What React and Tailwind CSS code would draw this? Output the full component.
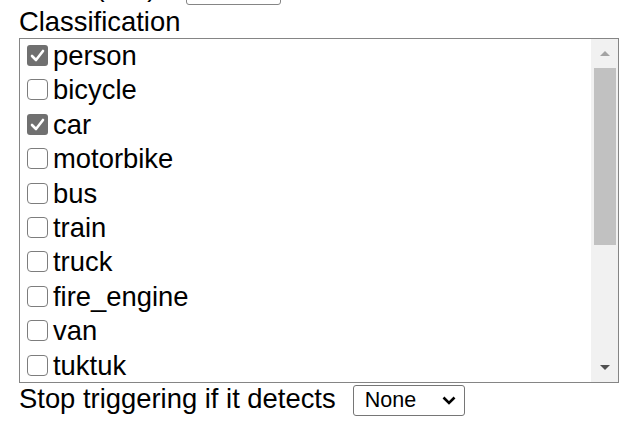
import React from "react";

const classes = [
  { name: "person", checked: true },
  { name: "bicycle", checked: false },
  { name: "car", checked: true },
  { name: "motorbike", checked: false },
  { name: "bus", checked: false },
  { name: "train", checked: false },
  { name: "truck", checked: false },
  { name: "fire_engine", checked: false },
  { name: "van", checked: false },
  { name: "tuktuk", checked: false },
  { name: "ambulance", checked: false },
  { name: "police_car", checked: false },
  { name: "dog", checked: false },
  { name: "cat", checked: false },
  { name: "horse", checked: false },
  { name: "cow", checked: false },
];

function Checkbox({ checked }) {
  if (checked) {
    return (
      <div className="w-[21px] h-[21px] rounded-[3px] bg-[#707070] flex items-center justify-center shrink-0">
        <svg width="15" height="13" viewBox="0 0 15 13">
          <path d="M2 7 L6 11 L13 2" fill="none" stroke="white" strokeWidth="2.6" strokeLinecap="round" strokeLinejoin="round" />
        </svg>
      </div>
    );
  }
  return <div className="w-[21px] h-[21px] rounded-[4px] border-[1.5px] border-[#7d7d7d] bg-white shrink-0"></div>;
}

function Scrollbar() {
  return (
    <div className="w-[27px] shrink-0 bg-[#f1f1f1] flex flex-col">
      <div className="h-[29px] flex items-center justify-center">
        <div className="w-0 h-0 border-l-[5px] border-r-[5px] border-b-[5px] border-l-transparent border-r-transparent border-b-[#a3a3a3]"></div>
      </div>
      <div className="h-[177px] ml-[3px] mr-[2px] bg-[#c1c1c1]"></div>
      <div className="flex-1"></div>
      <div className="h-[29px] flex items-center justify-center">
        <div className="w-0 h-0 border-l-[5px] border-r-[5px] border-t-[5px] border-l-transparent border-r-transparent border-t-[#505050]"></div>
      </div>
    </div>
  );
}

export default function App() {
  return (
    <div className="w-[634px] h-[435px] overflow-hidden bg-white text-black text-[27.4px] leading-[31px] font-['Liberation_Sans',Arial,sans-serif]">
      <div className="pl-[19px]">
        {/* previous field, mostly scrolled off */}
        <div className="-mt-[29px] flex items-start">
          <span>Timer (sec)</span>
          <div className="ml-[30px] mt-[3px] w-[95px] h-[31px] rounded-[3px] border-[1.5px] border-[#858585]"></div>
        </div>

        <div className="mt-[1px]">Classification</div>

        <div className="mt-[1px] w-[600px] h-[345px] border-[1.5px] border-[#858585] flex">
          <div className="flex-1 overflow-hidden">
            {classes.map((c) => (
              <div key={c.name} className="h-[34.4px] flex items-start leading-[34.4px] whitespace-nowrap">
                <div className="ml-[7px] mt-[6px]">
                  <Checkbox checked={c.checked} />
                </div>
                <span className="ml-[5px]">{c.name}</span>
              </div>
            ))}
          </div>
          <Scrollbar />
        </div>

        <div className="flex items-start">
          <span>Stop triggering if it detects</span>
          <div className="ml-[17px] mt-[2px] w-[112px] h-[31px] rounded-[3px] border-[1.5px] border-[#767676] flex items-center pl-[11px] pr-[8px] text-[21.5px]">
            <span className="flex-1">None</span>
            <svg width="14" height="9" viewBox="0 0 14 9">
              <path d="M1.5 1.5 L7 7 L12.5 1.5" fill="none" stroke="black" strokeWidth="2.6" />
            </svg>
          </div>
        </div>
      </div>
    </div>
  );
}
